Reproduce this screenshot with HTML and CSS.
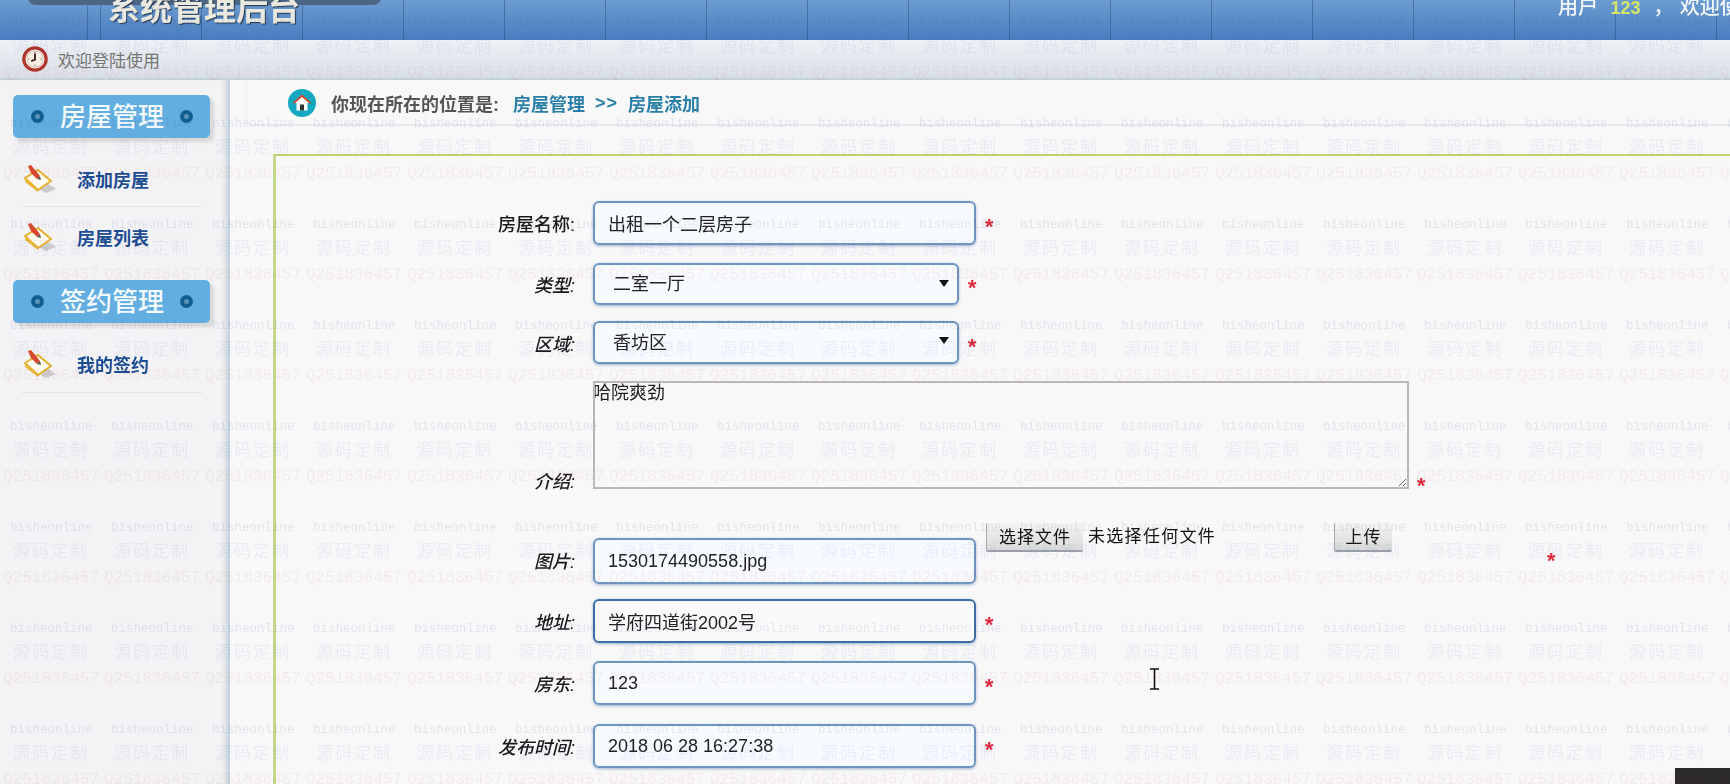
FILE: index.html
```html
<!DOCTYPE html>
<html lang="zh-CN">
<head>
<meta charset="utf-8">
<title>系统管理后台</title>
<link rel="stylesheet" href="styles.css">
</head>
<body>
<header class="topbar">
  <h1 class="brand">系统管理后台</h1>
  <p class="user">用户 <b>123</b> ， 欢迎使用</p>
</header>
<div class="subbar">
  <svg class="clock" viewBox="0 0 24 24" width="26" height="26"><circle cx="12" cy="12" r="10.300" fill="#fff" stroke="#b0352c" stroke-width="3"/><circle cx="12" cy="12" r="7.500" fill="#f8f2e6" stroke="#e2c4b4"/><path d="M12 5.500v1.500M12 17v1.500M5.500 12H7M17 12h1.500" stroke="#9a7a70" stroke-width="1"/><path d="M12 7v5.500l-3.500 1.500" fill="none" stroke="#4a2a20" stroke-width="1.800"/></svg>
  <span>欢迎登陆使用</span>
</div>
<div class="layout">
  <aside class="sidebar">
    <h2 class="side-title"><i class="dot"></i>房屋管理<i class="dot"></i></h2>
    <a class="item item-first">
      <svg class="note" viewBox="0 0 32 28" width="32" height="28"><use href="#note"/></svg>添加房屋
    </a>
    <a class="item item-plain">
      <svg class="note" viewBox="0 0 32 28" width="32" height="28"><use href="#note"/></svg>房屋列表
    </a>
    <h2 class="side-title"><i class="dot"></i>签约管理<i class="dot"></i></h2>
    <a class="item item-last">
      <svg class="note" viewBox="0 0 32 28" width="32" height="28"><use href="#note"/></svg>我的签约
    </a>
  </aside>
  <main class="content">
    <div class="crumb">
      <svg class="home" viewBox="0 0 28 28" width="28" height="28"><circle cx="14" cy="14" r="14" fill="#14a8c0"/><path d="M14 6 5.500 14h3v7.500h11V14h3z" fill="#fff"/><path d="M14 5.500 5 13.500l1.200 1.300L14 8l7.800 6.800 1.200-1.300z" fill="#d8402a"/><rect x="12" y="15.500" width="4" height="6" fill="#333"/></svg>
      <span class="crumb-lead">你现在所在的位置是:</span>
      <a class="crumb-link">房屋管理</a>
      <span class="crumb-sep">&gt;&gt;</span>
      <a class="crumb-link">房屋添加</a>
    </div>
    <form class="panel">
      <div class="row row-name">
        <label class="lbl lbl-plain">房屋名称:</label>
        <input class="field" type="text" value="出租一个二层房子">
        <span class="req">*</span>
      </div>
      <div class="row row-type">
        <label class="lbl">类型:</label>
        <div class="pick"><select class="choice"><option>二室一厅</option></select></div>
        <span class="req">*</span>
      </div>
      <div class="row row-area">
        <label class="lbl">区域:</label>
        <div class="pick pick-high"><select class="choice"><option>香坊区</option></select></div>
        <span class="req">*</span>
      </div>
      <div class="row row-intro">
        <label class="lbl lbl-bottom">介绍:</label>
        <textarea class="memo">哈院爽劲</textarea>
        <span class="req req-bottom">*</span>
      </div>
      <div class="row row-pic">
        <label class="lbl lbl-pic">图片:</label>
        <input class="field field-pic" type="text" value="1530174490558.jpg">
        <button class="btn btn-file" type="button">选择文件</button>
        <span class="nofile">未选择任何文件</span>
        <button class="btn btn-up" type="button">上传</button>
        <span class="req req-far">*</span>
      </div>
      <div class="row row-addr">
        <label class="lbl">地址:</label>
        <input class="field field-focus" type="text" value="学府四道街2002号">
        <span class="req">*</span>
      </div>
      <div class="row row-owner">
        <label class="lbl">房东:</label>
        <input class="field" type="text" value="123">
        <span class="req">*</span>
      </div>
      <div class="row row-time">
        <label class="lbl">发布时间:</label>
        <input class="field" type="text" value="2018 06 28 16:27:38">
        <span class="req">*</span>
      </div>
    </form>
  </main>
</div>
<div class="corner"></div>
<svg class="ibeam" viewBox="0 0 11 22" width="11" height="22"><path d="M1 1h9M5.500 1v20M1 21h9" fill="none" stroke="#111" stroke-width="1.600"/></svg>
<svg class="watermark" width="1730" height="784" aria-hidden="true">
  <defs>
    <g id="note">
      <path d="M8 20 22 28l10-4-9-6z" fill="#b9b9b9" opacity=".7"/>
      <path d="M1 13 14 5l13 11-13 9z" fill="#fffdf0" stroke="#e6b030" stroke-width="2"/>
      <path d="M1 14l13 11v2L1 17z" fill="#e8b838"/>
      <path d="M4 1 7 0l9 11-3 3-6-6z" fill="#d8482a"/>
      <path d="M13 14l3-3 1 4z" fill="#555"/>
    </g>
    <pattern id="tile" width="101" height="101" patternUnits="userSpaceOnUse">
      <text class="wm wm-a" x="10" y="26">bisheonline</text>
      <text class="wm wm-b" x="13" y="52">源码定制</text>
      <text class="wm wm-c" x="3" y="77">Q251836457</text>
    </pattern>
  </defs>
  <rect width="1730" height="784" fill="url(#tile)"/>
</svg>
</body>
</html>
```
FILE: styles.css
```css
* { box-sizing: border-box; }
html, body { margin: 0; height: 784px; overflow: hidden; }
body {
  position: relative;
  background: #f8f8f9;
  font-family: "Liberation Sans", "Noto Sans CJK SC", sans-serif;
  color: #222;
  filter: blur(.45px);
}

/* top bar */
.topbar {
  position: relative;
  height: 40px;
  display: flex;
  justify-content: space-between;
  overflow: hidden;
  background:
    repeating-linear-gradient(90deg, rgba(35,70,125,.45) 0 1px, transparent 1px 101px) 0 0,
    linear-gradient(#6b9ccf, #4a7cc0);
  background-position: 100px 0, 0 0;
}
.topbar::before {
  content: "";
  position: absolute;
  left: 28px;
  top: -10px;
  width: 353px;
  height: 15px;
  border-radius: 8px;
  background: #4d6684;
}
.brand {
  position: relative;
  margin: -11px 0 0 108px;
  font-size: 32px;
  line-height: 40px;
  font-weight: 700;
  color: #e9e9df;
  text-shadow: 1px 1px 1px #26364f;
  white-space: nowrap;
}
.user {
  margin: -7px 0 0;
  width: 172px;
  font-size: 20px;
  line-height: 28px;
  font-weight: 500;
  word-spacing: 1px;
  color: #f4f7fb;
  white-space: nowrap;
  overflow: hidden;
}
.user b { font-weight: 700; color: #d6e46a; margin: 0 6px; font-size: 18px; }

/* strip below */
.subbar {
  height: 40px;
  display: flex;
  align-items: center;
  padding-left: 22px;
  gap: 10px;
  font-size: 17px;
  color: #747474;
  background: linear-gradient(#eef1f5, #d9dfe8);
  border-bottom: 2px solid #c3d0dc;
}

.layout { display: flex; height: 704px; }

/* sidebar */
.sidebar {
  width: 230px;
  flex: none;
  padding-top: 15px;
  background: #f3f3f5;
  border-right: 2px solid #c2d3e0;
  box-shadow: inset -7px 0 6px -5px rgba(120,140,160,.35);
}
.side-title {
  width: 197px;
  height: 43px;
  margin: 0 0 0 13px;
  display: flex;
  align-items: center;
  justify-content: space-between;
  padding: 0 17px 4px 18px;
  border-radius: 5px;
  background: #62aee0;
  box-shadow: 4px 4px 3px rgba(90,80,70,.16);
  color: #f5fafd;
  font-size: 26px;
  font-weight: 500;
}
.dot {
  width: 13px;
  height: 13px;
  border-radius: 50%;
  border: 4px solid #0f5f90;
  background: #5b96b8;
  margin-top: 4px;
}
.item {
  display: flex;
  align-items: center;
  gap: 21px;
  height: 53px;
  margin: 0 26px 0 22px;
  padding-left: 2px;
  font-size: 18px;
  font-weight: 700;
  color: #1c4c92;
}
.item-first { margin-top: 13px; padding-top: 0; height: 56px; border-bottom: 1px solid #e1e3e6; }
.item-plain { margin-top: 3px; margin-bottom: 17px; }
.item-last { height: 58px; margin-top: 12px; border-bottom: 1px solid #e1e3e6; }
.note { flex: none; }

/* main */
.content { flex: 1; min-width: 0; overflow: hidden; }
.crumb {
  height: 46px;
  margin-left: 16px;
  padding: 2px 0 0 41px;
  display: flex;
  align-items: center;
  border-bottom: 2px solid #e6eaef;
  border-left: 1px solid #f0f1f3;
  border-radius: 5px 0 0 5px;
  font-size: 18px;
  font-weight: 700;
}
.home { flex: none; margin-right: 15px; }
.crumb-lead { color: #555; margin-right: 14px; font-size: 18px; }
.crumb-link { color: #2a7fa8; }
.crumb-sep { color: #2a7fa8; margin: 0 10px; letter-spacing: 1px; }

.panel {
  margin: 28px 0 0 43px;
  height: 640px;
  padding: 45px 0 0 0;
  border-top: 2px solid #bdd46c;
  border-left: 3px solid #c3d88a;
}
.row { display: flex; align-items: center; }
.row-name { height: 44px; }
.row-type { height: 42px; margin-top: 18px; }
.row-area { height: 43px; margin-top: 16px; }
.row-intro { height: 108px; margin-top: 17px; align-items: flex-end; }
.row-pic { height: 61px; margin-top: 34px; align-items: flex-start; }
.row-addr { height: 44px; margin-top: 15px; }
.row-owner { height: 44px; margin-top: 18px; }
.row-time { height: 44px; margin-top: 19px; }

.lbl {
  flex: none;
  width: 299px;
  margin-right: 18px;
  text-align: right;
  font-size: 18px;
  font-style: italic;
  font-weight: 500;
  color: #1a1a1a;
}
.lbl-plain { font-style: normal; }
.lbl-bottom { margin-bottom: -4px; }
.lbl-pic { margin-top: 24px; }

.field, .choice, .memo {
  font: 18px/24px "Liberation Sans", "Noto Sans CJK SC", sans-serif;
  color: #222;
}
.field {
  width: 383px;
  height: 100%;
  padding: 0 13px;
  border: 2px solid #6d95bf;
  border-radius: 6px;
  background: rgba(246,250,254,.9);
  box-shadow: 0 1px 3px rgba(70,110,160,.5);
}
.field-focus { border-color: #3f6ea6; background: rgba(250,250,250,.9); }
.field-pic { height: 46px; margin-top: 15px; }

.pick { position: relative; width: 366px; height: 100%; }
.pick::after {
  content: "";
  position: absolute;
  right: 10px;
  top: 17px;
  border: 5px solid transparent;
  border-top: 7px solid #111;
  border-bottom: 0;
}
.pick-high::after { top: 16px; }
.choice {
  appearance: none;
  width: 100%;
  height: 100%;
  padding: 0 18px;
  border: 2px solid #6d95bf;
  border-radius: 6px;
  background: rgba(246,250,254,.9);
  box-shadow: 0 1px 3px rgba(70,110,160,.5);
}
.memo {
  display: block;
  width: 816px;
  height: 108px;
  padding: 0;
  border: 2px solid #b8b8b8;
  background: transparent;
  line-height: 20px;
  text-indent: -2px;
}

.btn {
  height: 29px;
  padding: 0 0 2px;
  border: 0;
  border-left: 1px solid #aaa;
  border-bottom: 2px solid #9aa0aa;
  border-radius: 2px;
  background: linear-gradient(#f4f4f4, #d9d9d9);
  font: 17px/24px "Noto Sans CJK SC", sans-serif;
  letter-spacing: 1px;
  color: #111;
}
.btn-file { width: 97px; margin-left: 10px; flex: none; }
.nofile { margin: 1px 0 0 5px; width: 246px; flex: none; font-size: 17px; line-height: 26px; letter-spacing: 1.3px; color: #111; }
.btn-up { width: 58px; flex: none; }

.req {
  margin-left: 8px;
  color: #dd2a3c;
  font: italic 700 22px/12px "Liberation Sans", sans-serif;
  padding-top: 8px;
}
.req-bottom { margin-left: 7px; padding-top: 0; margin-bottom: -3px; align-self: flex-end; }
.req-far { margin: 24px 0 0 154px; }

/* overlays */
.corner {
  position: absolute;
  right: 0;
  bottom: 0;
  width: 55px;
  height: 16px;
  background: #2b2a2b;
}
.ibeam {
  position: absolute;
  left: 1149px;
  top: 668px;
}
.watermark {
  position: absolute;
  left: 0;
  top: 0;
  pointer-events: none;
}
.wm-a { font: 12.5px "Liberation Mono", monospace; fill: rgba(55,75,150,.11); }
.wm-b { font: 17px "Noto Sans CJK SC", sans-serif; letter-spacing: 2px; fill: rgba(70,80,190,.075); }
.wm-c { font: 16px "Liberation Mono", monospace; fill: rgba(195,50,90,.07); }
```
